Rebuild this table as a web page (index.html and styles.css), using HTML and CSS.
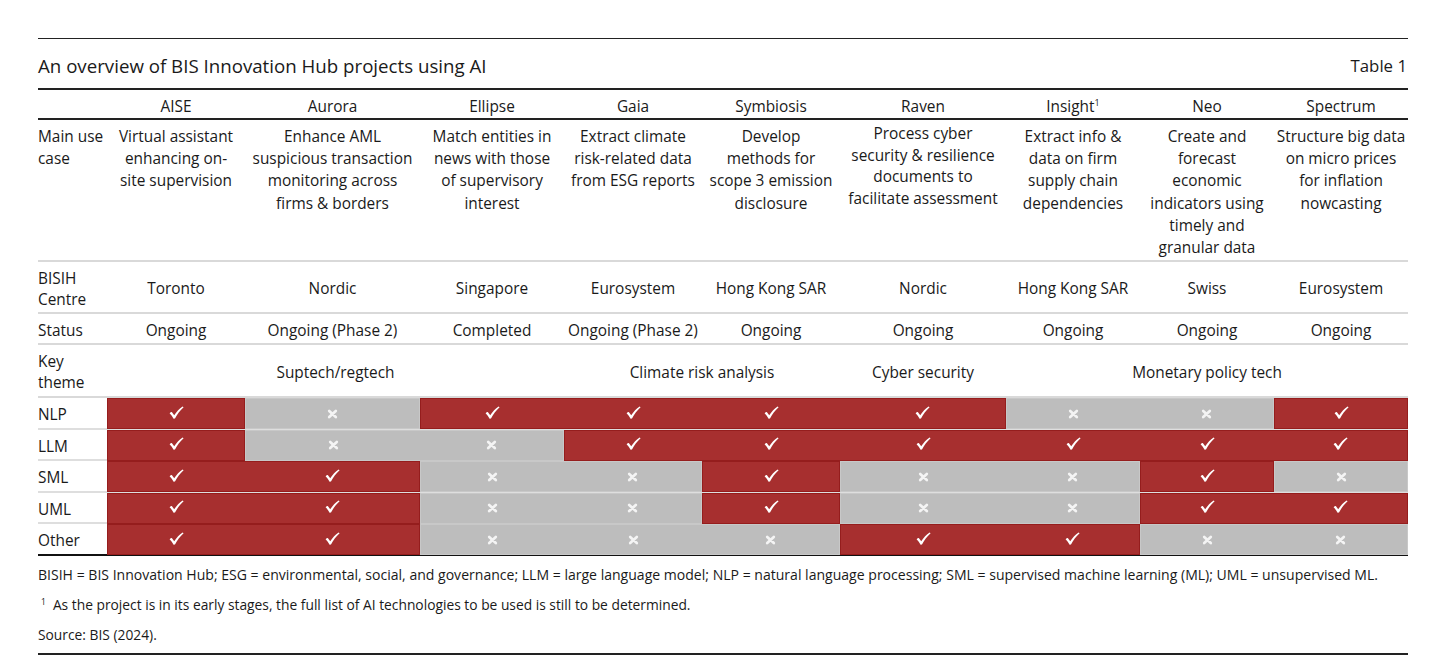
FILE: index.html
```html
<!DOCTYPE html>
<html lang="en">
<head>
<meta charset="utf-8">
<title>An overview of BIS Innovation Hub projects using AI</title>
<link rel="stylesheet" href="styles.css">
</head>
<body>
<svg class="defs" aria-hidden="true">
  <symbol id="ck" viewBox="0 0 15 13"><path d="M0.6 7.2 C1.4 6.4 2.2 6 2.8 6.1 L5.2 9.2 C7.6 5.6 10.4 2.6 13.6 0.4 L14.6 1.2 C11.2 4.2 8.4 8 6 12.6 L4.6 12.8 C3.4 10.6 2.2 8.8 0.6 7.2 Z"/></symbol>
  <symbol id="xx" viewBox="0 0 11 10"><path d="M2.2 2 L8.8 8 M8.8 2 L2.2 8"/></symbol>
</svg>
<div class="figure">
  <div class="titlebar">
    <span class="title">An overview of BIS Innovation Hub projects using AI</span>
    <span class="tno">Table 1</span>
  </div>

  <div class="row head cols">
    <div></div>
    <div class="c">AISE</div>
    <div class="c">Aurora</div>
    <div class="c">Ellipse</div>
    <div class="c">Gaia</div>
    <div class="c">Symbiosis</div>
    <div class="c">Raven</div>
    <div class="c">Insight<sup>1</sup></div>
    <div class="c">Neo</div>
    <div class="c">Spectrum</div>
  </div>

  <div class="row use cols">
    <div class="lab">Main use<br>case</div>
    <div class="c">Virtual assistant<br>enhancing on-<br>site supervision</div>
    <div class="c">Enhance AML<br>suspicious transaction<br>monitoring across<br>firms &amp; borders</div>
    <div class="c">Match entities in<br>news with those<br>of supervisory<br>interest</div>
    <div class="c">Extract climate<br>risk-related data<br>from ESG reports</div>
    <div class="c">Develop<br>methods for<br>scope 3 emission<br>disclosure</div>
    <div class="c raven">Process cyber<br>security &amp; resilience<br>documents to<br>facilitate assessment</div>
    <div class="c">Extract info &amp;<br>data on firm<br>supply chain<br>dependencies</div>
    <div class="c">Create and<br>forecast<br>economic<br>indicators using<br>timely and<br>granular data</div>
    <div class="c">Structure big data<br>on micro prices<br>for inflation<br>nowcasting</div>
  </div>

  <div class="row two cols">
    <div class="lab">BISIH<br>Centre</div>
    <div class="c">Toronto</div>
    <div class="c">Nordic</div>
    <div class="c">Singapore</div>
    <div class="c">Eurosystem</div>
    <div class="c">Hong Kong SAR</div>
    <div class="c">Nordic</div>
    <div class="c">Hong Kong SAR</div>
    <div class="c">Swiss</div>
    <div class="c">Eurosystem</div>
  </div>

  <div class="row one cols">
    <div class="lab">Status</div>
    <div class="c">Ongoing</div>
    <div class="c">Ongoing (Phase 2)</div>
    <div class="c">Completed</div>
    <div class="c">Ongoing (Phase 2)</div>
    <div class="c">Ongoing</div>
    <div class="c">Ongoing</div>
    <div class="c">Ongoing</div>
    <div class="c">Ongoing</div>
    <div class="c">Ongoing</div>
  </div>

  <div class="row two key cols">
    <div class="lab">Key<br>theme</div>
    <div class="c sp3">Suptech/regtech</div>
    <div class="c sp2">Climate risk analysis</div>
    <div class="c">Cyber security</div>
    <div class="c sp3">Monetary policy tech</div>
  </div>

  <div class="row ind cols">
    <div class="lab">NLP</div>
    <div class="seg yes"><span class="mk"><svg class="ck"><use href="#ck"/></svg></span></div>
    <div class="seg no"><span class="mk"><svg class="xx"><use href="#xx"/></svg></span></div>
    <div class="seg yes sp4"><span class="mk"><svg class="ck"><use href="#ck"/></svg></span><span class="mk"><svg class="ck"><use href="#ck"/></svg></span><span class="mk"><svg class="ck"><use href="#ck"/></svg></span><span class="mk"><svg class="ck"><use href="#ck"/></svg></span></div>
    <div class="seg no sp2"><span class="mk"><svg class="xx"><use href="#xx"/></svg></span><span class="mk"><svg class="xx"><use href="#xx"/></svg></span></div>
    <div class="seg yes"><span class="mk"><svg class="ck"><use href="#ck"/></svg></span></div>
  </div>

  <div class="row ind cols">
    <div class="lab">LLM</div>
    <div class="seg yes"><span class="mk"><svg class="ck"><use href="#ck"/></svg></span></div>
    <div class="seg no sp2"><span class="mk"><svg class="xx"><use href="#xx"/></svg></span><span class="mk"><svg class="xx"><use href="#xx"/></svg></span></div>
    <div class="seg yes sp6"><span class="mk"><svg class="ck"><use href="#ck"/></svg></span><span class="mk"><svg class="ck"><use href="#ck"/></svg></span><span class="mk"><svg class="ck"><use href="#ck"/></svg></span><span class="mk"><svg class="ck"><use href="#ck"/></svg></span><span class="mk"><svg class="ck"><use href="#ck"/></svg></span><span class="mk"><svg class="ck"><use href="#ck"/></svg></span></div>
  </div>

  <div class="row ind cols">
    <div class="lab">SML</div>
    <div class="seg yes sp2"><span class="mk"><svg class="ck"><use href="#ck"/></svg></span><span class="mk"><svg class="ck"><use href="#ck"/></svg></span></div>
    <div class="seg no sp2"><span class="mk"><svg class="xx"><use href="#xx"/></svg></span><span class="mk"><svg class="xx"><use href="#xx"/></svg></span></div>
    <div class="seg yes"><span class="mk"><svg class="ck"><use href="#ck"/></svg></span></div>
    <div class="seg no sp2"><span class="mk"><svg class="xx"><use href="#xx"/></svg></span><span class="mk"><svg class="xx"><use href="#xx"/></svg></span></div>
    <div class="seg yes"><span class="mk"><svg class="ck"><use href="#ck"/></svg></span></div>
    <div class="seg no"><span class="mk"><svg class="xx"><use href="#xx"/></svg></span></div>
  </div>

  <div class="row ind cols">
    <div class="lab">UML</div>
    <div class="seg yes sp2"><span class="mk"><svg class="ck"><use href="#ck"/></svg></span><span class="mk"><svg class="ck"><use href="#ck"/></svg></span></div>
    <div class="seg no sp2"><span class="mk"><svg class="xx"><use href="#xx"/></svg></span><span class="mk"><svg class="xx"><use href="#xx"/></svg></span></div>
    <div class="seg yes"><span class="mk"><svg class="ck"><use href="#ck"/></svg></span></div>
    <div class="seg no sp2"><span class="mk"><svg class="xx"><use href="#xx"/></svg></span><span class="mk"><svg class="xx"><use href="#xx"/></svg></span></div>
    <div class="seg yes sp2"><span class="mk"><svg class="ck"><use href="#ck"/></svg></span><span class="mk"><svg class="ck"><use href="#ck"/></svg></span></div>
  </div>

  <div class="row ind last cols">
    <div class="lab">Other</div>
    <div class="seg yes sp2"><span class="mk"><svg class="ck"><use href="#ck"/></svg></span><span class="mk"><svg class="ck"><use href="#ck"/></svg></span></div>
    <div class="seg no sp3"><span class="mk"><svg class="xx"><use href="#xx"/></svg></span><span class="mk"><svg class="xx"><use href="#xx"/></svg></span><span class="mk"><svg class="xx"><use href="#xx"/></svg></span></div>
    <div class="seg yes sp2"><span class="mk"><svg class="ck"><use href="#ck"/></svg></span><span class="mk"><svg class="ck"><use href="#ck"/></svg></span></div>
    <div class="seg no sp2"><span class="mk"><svg class="xx"><use href="#xx"/></svg></span><span class="mk"><svg class="xx"><use href="#xx"/></svg></span></div>
  </div>

  <div class="notes">
    <p>BISIH = BIS Innovation Hub; ESG = environmental, social, and governance; LLM = large language model; NLP = natural language processing; SML = supervised machine learning (ML); UML = unsupervised ML.</p>
    <p class="fn"><sup>1</sup><span>As the project is in its early stages, the full list of AI technologies to be used is still to be determined.</span></p>
    <p>Source: BIS (2024).</p>
  </div>
</div>
</body>
</html>
```

FILE: styles.css
```css
html, body {
  margin: 0;
  padding: 0;
  background: #ffffff;
}

body {
  font-family: "Open Sans", "Noto Sans", sans-serif;
  color: #1a1a1a;
}

.defs {
  position: absolute;
  width: 0;
  height: 0;
  overflow: hidden;
}

.figure {
  margin: 38px 0 0 38px;
  width: 1370px;
  border-top: 1px solid #222;
}

.titlebar {
  display: flex;
  justify-content: space-between;
  align-items: flex-end;
  box-sizing: border-box;
  height: 51px;
  padding: 0 1px 11px 0;
  border-bottom: 2px solid #222;
  line-height: 22px;
}

.title {
  font-size: 18.7px;
}

.tno {
  font-size: 16.8px;
}

.cols {
  display: grid;
  grid-template-columns: 69px 138px 175px 144px 138px 138px 166px 134px 134px 134px;
}

.row {
  font-size: 15.4px;
  line-height: 22.2px;
  border-bottom: 2px solid #d9d9d9;
  box-sizing: border-box;
}

.c {
  text-align: center;
  white-space: nowrap;
}

.lab {
  text-align: left;
  white-space: nowrap;
}

sup {
  font-size: 9px;
  line-height: 0;
  vertical-align: 6px;
}

.head {
  height: 30px;
  padding-top: 6px;
  border-bottom: 2px solid #222;
  line-height: 22px;
}

.use {
  padding: 6px 0 1px;
}

.use .raven {
  line-height: 21.7px;
  margin-top: -3px;
}

.two {
  height: 52px;
  padding-top: 3px;
  align-items: center;
  line-height: 21px;
}

.two.key {
  height: 53px;
  padding-top: 4px;
}

.key .lab {
  margin-top: -2px;
}

.one {
  height: 31px;
  padding-top: 6px;
  line-height: 22px;
}

.sp2 { grid-column: span 2; }
.sp3 { grid-column: span 3; }
.sp4 { grid-column: span 4; }
.sp6 { grid-column: span 6; }

.ind {
  height: 31.5px;
  border-bottom: 2px solid #dedede;
}

.ind .lab {
  line-height: 28px;
  padding-top: 3px;
}

.ind.last {
  border-bottom: 2px solid #111;
  height: 32px;
}

.seg {
  display: grid;
  grid-template-columns: subgrid;
  box-sizing: border-box;
}

.seg.yes {
  background: #a72f2f;
  border: 1px solid #951d1d;
}

.seg.no {
  background: #bdbdbd;
  border: 1px solid #c8c8c8;
}

.mk {
  display: flex;
  align-items: center;
  justify-content: center;
}

.ck {
  width: 15px;
  height: 13px;
  fill: #ffffff;
  margin-top: -3px;
}

.xx {
  width: 11px;
  height: 10px;
  fill: none;
  stroke: #f4f4f4;
  stroke-width: 2.7;
  stroke-linecap: round;
}

.notes {
  border-bottom: 2px solid #222;
  padding: 10px 0 9px;
  font-size: 13.8px;
  line-height: 18px;
}

.notes p {
  margin: 0 0 12px;
}

.notes p:first-child {
  font-size: 14.05px;
}

.notes p:last-child {
  margin-bottom: 0;
}

.notes .fn {
  display: flex;
  gap: 7px;
  padding-left: 3px;
}

.notes .fn sup {
  font-size: 8.5px;
  vertical-align: 0;
  line-height: 12px;
}
```
